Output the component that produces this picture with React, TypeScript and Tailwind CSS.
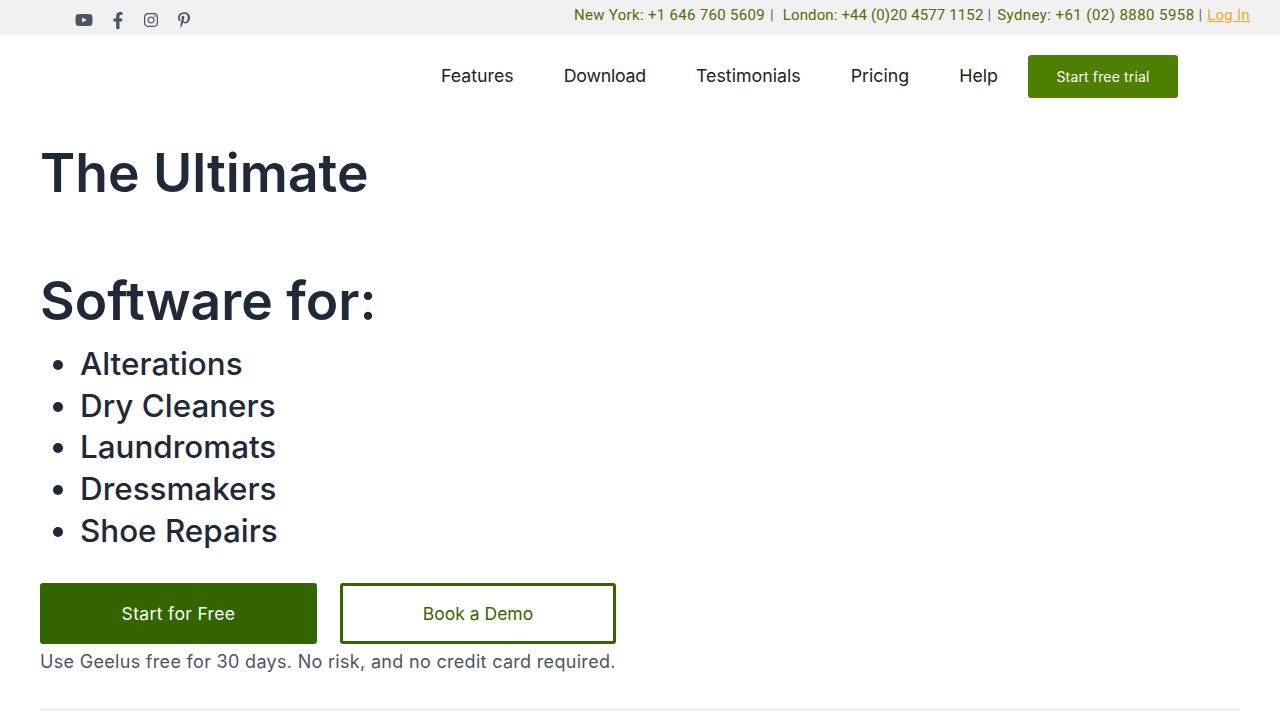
import { FaYoutube, FaFacebookF, FaInstagram, FaPinterestP } from "react-icons/fa";

const font = "font-['Inter','Liberation_Sans',sans-serif]";

export default function App() {
  return (
    <div className={`h-[720px] overflow-hidden bg-white ${font}`}>
      <div className="flex h-[35px] items-start justify-between bg-[#f1f1f1] pl-[75px] pr-[30px]">
        <div className="flex items-center gap-[17px] pt-[11px] text-[#4b5563]">
          <FaYoutube className="h-[18px] w-[18px]" />
          <FaFacebookF className="h-[17px] w-[16px]" />
          <FaInstagram className="h-[16px] w-[16px]" />
          <FaPinterestP className="h-[16px] w-[16px]" />
        </div>
        <div className="pt-[5px] font-['Roboto',sans-serif] text-[15px] leading-[21px] text-[#666]">
          <span className="tracking-[0.32px] text-[#556b0a]">New York: +1 646 760 5609</span>
          <span className="ml-[5px]">|</span>
          <span className="ml-[9px] tracking-[0.13px] text-[#556b0a]">London: +44 (0)20 4577 1152</span>
          <span className="ml-[4px]">|</span>
          <span className="ml-[6px] tracking-[0.43px] text-[#556b0a]">Sydney: +61 (02) 8880 5958</span>
          <span className="ml-[4px]">|</span>
          <a className="ml-[5px] tracking-[0.28px] text-[#f9a825] underline">Log In</a>
        </div>
      </div>
      <nav className="flex h-[81px] items-center justify-end gap-[50px] pr-[102px] pt-[1px] text-[17.8px] text-[#222]">
        <a>Features</a>
        <a className="tracking-[-0.25px]">Download</a>
        <a>Testimonials</a>
        <a>Pricing</a>
        <a className="-mr-[20px]">Help</a>
        <a className="flex h-[43px] w-[150px] items-center justify-center rounded-[3px] bg-[#4d7f00] text-[14px] font-normal tracking-[0.15px] text-white">
          Start free trial
        </a>
      </nav>
      <main className="px-10 pt-[25px]">
        <h1 className="text-[53.4px] font-semibold leading-[64px] text-[#1f2937]">
          The Ultimate
          <br />
          <br />
          Software for:
        </h1>
        <ul className="mt-[11px] list-disc pl-10 text-[31.4px] font-medium leading-[41.7px] text-[#1f2937]">
          <li>Alterations</li>
          <li>Dry Cleaners</li>
          <li>Laundromats</li>
          <li>Dressmakers</li>
          <li>Shoe Repairs</li>
        </ul>
        <div className="mt-[30px] flex gap-[23px]">
          <a className="flex h-[61px] w-[277px] items-center justify-center rounded-[3px] bg-[#336600] pt-[2px] text-[17.5px] tracking-[0.35px] text-white">
            Start for Free
          </a>
          <a className="flex h-[61px] w-[276px] items-center justify-center rounded-[3px] border-[3px] border-[#336600] pt-[2px] text-[17.5px] text-[#336600]">
            Book a Demo
          </a>
        </div>
        <p className="mt-[4px] text-[18px] leading-[28px] tracking-[0.31px] text-[#4b5563]">
          Use Geelus free for 30 days. No risk, and no credit card required.
        </p>
        <hr className="mt-[33px] border-[#e0e0e0]" />
      </main>
    </div>
  );
}
